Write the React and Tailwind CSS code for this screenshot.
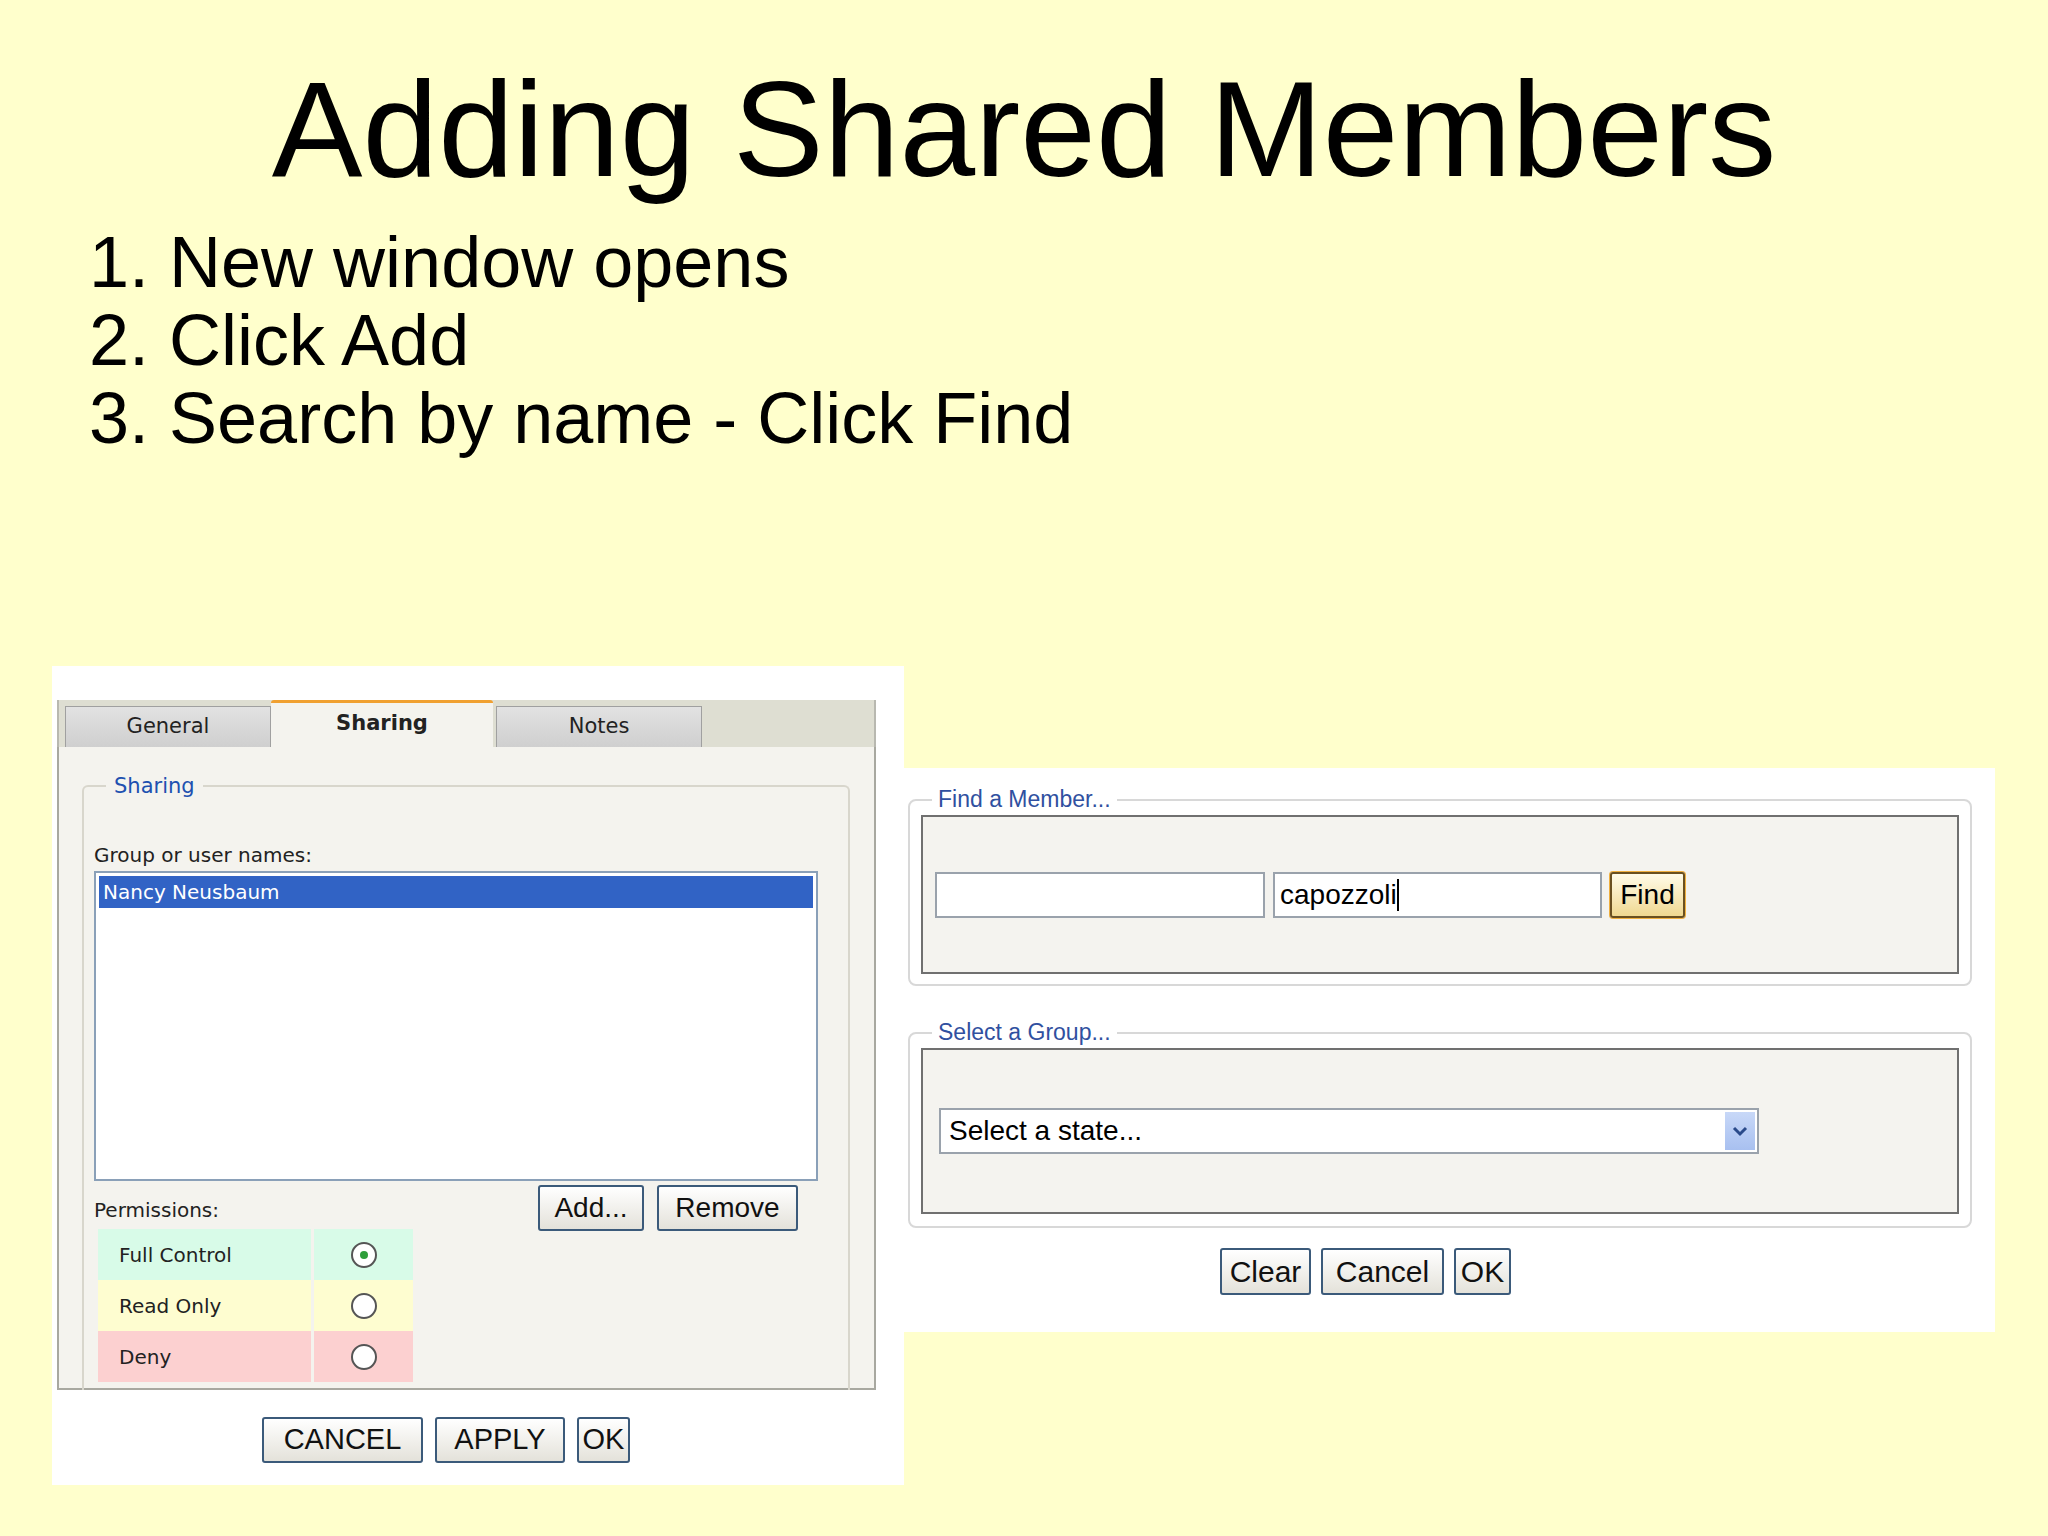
export default function App() {
  const tahoma = { fontFamily: '"DejaVu Sans", Verdana, sans-serif' };
  const btn = "flex items-center justify-center border-2 border-[#3b5a7a] rounded-[3px] bg-gradient-to-b from-white to-[#e4e2da] text-[#111]";
  const narrow = { fontFamily: '"Liberation Sans Narrow", "Liberation Sans", Arial, sans-serif' };
  const Radio = ({ on }) => (
    <div className="w-[26px] h-[26px] rounded-full border-2 border-[#555] bg-white flex items-center justify-center">
      {on && <div className="w-[8px] h-[8px] rounded-full bg-[#2e9e3a]" />}
    </div>
  );
  return (
    <div className="w-[2048px] h-[1536px] bg-[#ffffcc] overflow-hidden" style={{ fontFamily: '"Liberation Sans", Arial, sans-serif' }}>
      <div className="pt-[61px] text-center text-[136px] leading-none text-black">Adding Shared Members</div>
      <div className="mt-[26px] pl-[89px] text-[72px] leading-[78px] text-black">
        <div>1. New window opens</div>
        <div>2. Click Add</div>
        <div>3. Search by name - Click Find</div>
      </div>
      <div className="flex items-start mt-[209px]">
        {/* Left panel */}
        <div className="ml-[52px] w-[852px] h-[819px] bg-white pt-[34px] pl-[5px]" style={tahoma}>
          <div className="w-[819px] h-[47px] bg-[#deded2] flex items-end pl-[6px] border-x-2 border-[#b8b8b0]">
            <div className="w-[206px] h-[41px] bg-gradient-to-b from-[#e2e2e2] to-[#cfcfcf] border border-[#a0a0a0] border-b-0 flex items-center justify-center text-[21px] text-[#222]">General</div>
            <div className="w-[222px] h-[47px] bg-[#f4f3ee] border-t-[3px] border-[#f0a030] rounded-t-[3px] flex items-start pt-[5px] justify-center text-[21px] font-bold text-[#222]">Sharing</div>
            <div className="w-[206px] h-[41px] ml-[3px] bg-gradient-to-b from-[#e2e2e2] to-[#cfcfcf] border border-[#a0a0a0] border-b-0 flex items-center justify-center text-[21px] text-[#222]">Notes</div>
          </div>
          <div className="w-[819px] h-[643px] bg-[#f4f3ee] border-2 border-t-0 border-[#a8a8a0] pl-[23px] pr-[24px] pt-[38px]">
            <div className="relative h-[605px] border-2 border-b-0 border-[#d8d6cc] rounded-t-[6px] px-[10px] pt-[56px]">
              <div className="absolute -top-[14px] left-[22px] bg-[#f4f3ee] px-[8px] text-[21px] text-[#2050b0] leading-[26px]">Sharing</div>
              <div className="text-[20px] text-[#222] leading-[24px]">Group or user names:</div>
              <div className="mt-[4px] w-[724px] h-[310px] border-2 border-[#8aa0b8] bg-white p-[3px]">
                <div className="h-[32px] bg-[#3163c5] text-white text-[20px] pl-[4px] leading-[32px]">Nancy Neusbaum</div>
              </div>
              <div className="flex mt-[17px]">
                <div className="w-[444px]">
                  <div className="text-[20px] text-[#222] leading-[24px]">Permissions:</div>
                  <div className="mt-[7px] ml-[4px] w-[315px] text-[20px] text-[#222]">
                    {[["Full Control", "#d8fbe8", true], ["Read Only", "#fefdd0", false], ["Deny", "#fcd0d0", false]].map(([l, c, on]) => (
                      <div key={l} className="flex h-[51px]">
                        <div className="w-[215px] pl-[21px] flex items-center" style={{ background: c }}>{l}</div>
                        <div className="w-[100px] ml-[3px] flex items-center justify-center" style={{ background: c }}><Radio on={on} /></div>
                      </div>
                    ))}
                  </div>
                </div>
                <div className="flex gap-[13px] -mt-[13px]" style={{ fontFamily: '"Liberation Sans", Arial, sans-serif' }}>
                  <div className={btn + " w-[106px] h-[46px] text-[28px]"}>Add...</div>
                  <div className={btn + " w-[141px] h-[46px] text-[28px]"}>Remove</div>
                </div>
              </div>
            </div>
          </div>
          <div className="flex ml-[205px] mt-[27px] gap-[12px]" style={{ fontFamily: '"Liberation Sans", Arial, sans-serif' }}>
            <div className={btn + " w-[161px] h-[46px] text-[29px]"}>CANCEL</div>
            <div className={btn + " w-[130px] h-[46px] text-[29px]"}>APPLY</div>
            <div className={btn + " w-[53px] h-[46px] text-[29px]"}>OK</div>
          </div>
        </div>
        {/* Right panel */}
        <div className="mt-[102px] w-[1091px] h-[564px] bg-white pl-[4px] pt-[31px]" style={narrow}>
          {[
            ["Find a Member...", (
              <div className="flex items-center gap-[8px] pl-[12px] pt-[55px]">
                <div className="w-[330px] h-[46px] border-2 border-[#9aa2ac] bg-white" />
                <div className="w-[329px] h-[46px] border-2 border-[#9aa2ac] bg-white text-[28px] pl-[5px] flex items-center text-black">capozzoli<span className="w-[2px] h-[32px] bg-black" /></div>
                <div className="w-[75px] h-[46px] border-2 border-[#6a5020] rounded-[3px] bg-gradient-to-b from-[#fffbe8] to-[#f0d890] shadow-[0_0_0_1px_#f0b040] flex items-center justify-center text-[28px] text-black">Find</div>
              </div>
            ), 187, 159],
            ["Select a Group...", (
              <div className="pl-[16px] pt-[58px]">
                <div className="w-[820px] h-[46px] border-2 border-[#9aa2ac] bg-white flex items-center justify-between text-[28px] text-black pl-[8px] pr-[2px]">
                  <span>Select a state...</span>
                  <div className="w-[30px] h-[38px] bg-gradient-to-b from-[#c8d8f8] to-[#a8c0f0] flex items-center justify-center">
                    <svg width="16" height="12" viewBox="0 0 16 12"><path d="M2 3 L8 9 L14 3" stroke="#2a4a8a" strokeWidth="3" fill="none" /></svg>
                  </div>
                </div>
              </div>
            ), 196, 166],
          ].map(([t, content, h, ih], i) => (
            <div key={t} className={"relative w-[1064px] border-2 border-[#d8d8d8] rounded-[8px] px-[11px] pt-[14px] " + (i === 1 ? "mt-[46px]" : "")} style={{ height: h }}>
              <div className="absolute -top-[16px] left-[22px] bg-white px-[6px] text-[23px] text-[#3050a0] leading-[28px]">{t}</div>
              <div className="border-2 border-[#707070] bg-[#f4f3ef]" style={{ height: ih }}>{content}</div>
            </div>
          ))}
          <div className="flex ml-[312px] mt-[20px] gap-[10px]">
            <div className={btn + " w-[91px] h-[47px] text-[30px]"}>Clear</div>
            <div className={btn + " w-[123px] h-[47px] text-[30px]"}>Cancel</div>
            <div className={btn + " w-[57px] h-[47px] text-[30px]"}>OK</div>
          </div>
        </div>
      </div>
    </div>
  );
}
